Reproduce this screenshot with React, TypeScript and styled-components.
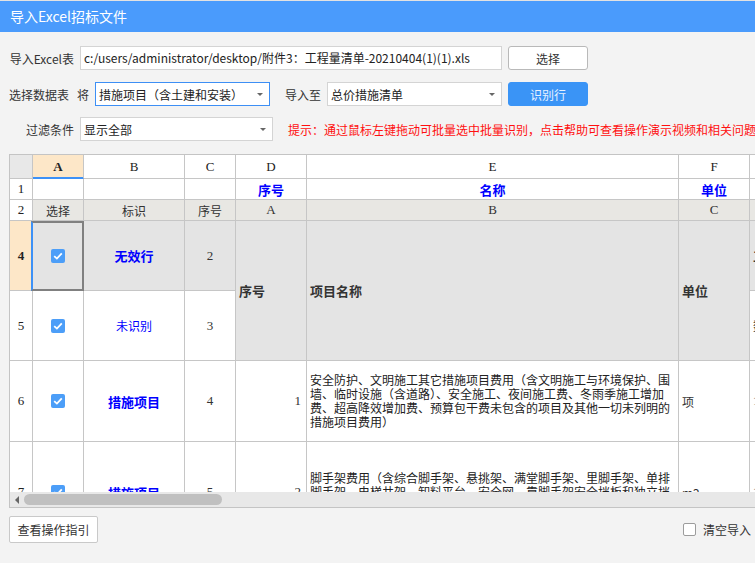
import React from 'react';
import styled, { createGlobalStyle } from 'styled-components';

const GlobalStyle = createGlobalStyle`
  html, body {
    margin: 0;
    padding: 0;
    background: #f3f3f3;
  }
  body {
    font-family: "Noto Sans CJK SC", "Noto Sans", sans-serif;
    font-size: 12px;
    color: #333;
  }
  * {
    box-sizing: border-box;
  }
`;

const CJK = '"Noto Sans CJK SC", "Noto Sans", sans-serif';
const SERIF = '"Liberation Serif", "Noto Sans CJK SC", serif';

const Window = styled.div`
  width: 755px;
  height: 563px;
  overflow: hidden;
  background: #f3f3f3;
  display: flex;
  flex-direction: column;
`;

const TopEdge = styled.div`
  flex: none;
  height: 1px;
  background: #e2e2e2;
`;

const TitleBar = styled.div`
  flex: none;
  height: 31px;
  line-height: 31px;
  padding-left: 10px;
  background: #4a9bfc;
  color: #fff;
  font-size: 14px;
`;

const Form = styled.div`
  display: flex;
  flex-direction: column;
  padding: 14px 0 0 9px;
`;

const FormRow = styled.div<{ $gap?: number }>`
  display: flex;
  align-items: center;
  height: 24px;
  margin-top: ${p => p.$gap ?? 0}px;
  white-space: nowrap;
`;

const Label = styled.span<{ $w?: number; $ml?: number }>`
  flex: none;
  width: ${p => (p.$w ? `${p.$w}px` : 'auto')};
  margin-left: ${p => p.$ml ?? 0}px;
  text-align: right;
  font-size: 12px;
  color: #333;
`;

const TextInput = styled.div`
  flex: none;
  width: 422px;
  height: 24px;
  margin-left: 6px;
  padding-left: 3px;
  line-height: 22px;
  background: #fff;
  border: 1px solid #d4d4d4;
  font-size: 12px;
  color: #222;
  overflow: hidden;
`;

const Select = styled.div<{ $w: number; $ml: number; $focus?: boolean }>`
  flex: none;
  display: flex;
  align-items: center;
  justify-content: space-between;
  width: ${p => p.$w}px;
  height: 24px;
  margin-left: ${p => p.$ml}px;
  padding: 0 6px 0 3px;
  background: #fff;
  border: 1px solid ${p => (p.$focus ? '#3d8ff5' : '#d4d4d4')};
  font-size: 12px;
  color: #222;
`;

const Caret = styled.span`
  width: 0;
  height: 0;
  border-left: 3px solid transparent;
  border-right: 3px solid transparent;
  border-top: 3px solid #666;
`;

const Button = styled.button<{ $primary?: boolean }>`
  flex: none;
  width: 80px;
  height: 24px;
  margin-left: 6px;
  padding: 0;
  border-radius: 3px;
  font-family: ${CJK};
  font-size: 12px;
  background: ${p => (p.$primary ? '#3a94f6' : '#fff')};
  color: ${p => (p.$primary ? '#e8f2ff' : '#333')};
  border: 1px solid ${p => (p.$primary ? '#3a94f6' : '#b9b9b9')};
`;

const Hint = styled.span`
  margin-left: 15px;
  color: #ff1010;
  font-size: 12px;
`;

const Sheet = styled.div`
  flex: none;
  display: flex;
  flex-direction: column;
  width: 760px;
  height: 354px;
  margin: 13px 0 0 9px;
  border: 1px solid #c4c4c4;
  border-right: none;
  background: #fff;
`;

const Viewport = styled.div`
  flex: 1;
  display: grid;
  grid-template-columns: 23px 51px 101px 51px 71px 372px 71px 80px;
  grid-template-rows: 24px 21px 21px 70px 70px 81px 101px;
  align-content: start;
  overflow: hidden;
`;

const CellBase = styled.div`
  display: flex;
  align-items: center;
  border-right: 1px solid #c6c6c6;
  border-bottom: 1px solid #c6c6c6;
  overflow: hidden;
  white-space: nowrap;
`;

const Corner = styled(CellBase)`
  background: #e8e8e8;
`;

const ColHead = styled(CellBase)<{ $active?: boolean }>`
  justify-content: center;
  font-family: ${SERIF};
  font-size: 13px;
  color: #222;
  font-weight: ${p => (p.$active ? 700 : 400)};
  background: ${p => (p.$active ? '#fde7c8' : '#fff')};
  border-bottom-color: ${p => (p.$active ? '#3d91f7' : '#c6c6c6')};
  box-shadow: ${p => (p.$active ? 'inset 0 -1px 0 #3d91f7' : 'none')};
`;

const RowHead = styled(CellBase)<{ $active?: boolean }>`
  justify-content: center;
  font-family: ${SERIF};
  font-size: 13px;
  color: #222;
  font-weight: ${p => (p.$active ? 700 : 400)};
  background: ${p => (p.$active ? '#fde7c8' : '#fff')};
`;

type Align = 'left' | 'center' | 'right';

const Cell = styled(CellBase)<{
  $align?: Align;
  $bg?: string;
  $blue?: boolean;
  $bold?: boolean;
  $latin?: boolean;
  $span?: number;
  $selected?: boolean;
}>`
  position: ${p => (p.$selected ? 'relative' : 'static')};
  overflow: ${p => (p.$selected ? 'visible' : 'hidden')};
  grid-row: ${p => (p.$span ? `span ${p.$span}` : 'auto')};
  justify-content: ${p =>
    p.$align === 'left' ? 'flex-start' : p.$align === 'right' ? 'flex-end' : 'center'};
  padding: ${p => (p.$align === 'right' ? '0 5px 0 0' : p.$align === 'left' ? '0 0 0 3px' : '0')};
  background: ${p => p.$bg ?? '#fff'};
  color: ${p => (p.$blue ? '#0000ff' : '#333')};
  font-family: ${p => (p.$latin ? SERIF : CJK)};
  font-size: ${p => (p.$bold || p.$latin ? 13 : 12)}px;
  font-weight: ${p => (p.$bold ? 700 : 400)};

  &::after {
    content: '';
    display: ${p => (p.$selected ? 'block' : 'none')};
    position: absolute;
    top: 0;
    left: -2px;
    right: -1px;
    bottom: -1px;
    border: 2px solid #808080;
    border-left-color: #3d91f7;
    pointer-events: none;
  }
`;

const Desc = styled.div`
  width: 362px;
  white-space: normal;
  font-size: 12px;
  line-height: 14px;
  color: #222;
`;

const Check = styled.span`
  display: inline-flex;
  align-items: center;
  justify-content: center;
  width: 14px;
  height: 14px;
  border-radius: 2px;
  background: #4c9ef8;
`;

const ScrollTrack = styled.div`
  flex: none;
  display: flex;
  align-items: center;
  height: 15px;
  padding-left: 5px;
  background: #e8e8e8;
`;

const ScrollArrow = styled.span`
  width: 0;
  height: 0;
  border-top: 4px solid transparent;
  border-bottom: 4px solid transparent;
  border-right: 4px solid #666;
`;

const ScrollThumb = styled.div`
  width: 198px;
  height: 11px;
  margin-left: 5px;
  border-radius: 6px;
  background: #c0c0c0;
`;

const Footer = styled.div`
  display: flex;
  align-items: center;
  justify-content: space-between;
  margin-top: 8px;
  padding: 0 4px 0 9px;
`;

const GuideButton = styled.button`
  width: 89px;
  height: 27px;
  padding: 0;
  background: #fff;
  border: 1px solid #c9c9c9;
  border-radius: 2px;
  font-family: ${CJK};
  font-size: 12px;
  color: #333;
`;

const ClearOption = styled.label`
  display: flex;
  align-items: center;
  gap: 7px;
  font-size: 12px;
  color: #333;
`;

const EmptyBox = styled.span`
  width: 13px;
  height: 13px;
  border: 1px solid #9c9c9c;
  border-radius: 2px;
  background: #fff;
`;

const Tick = () => (
  <Check>
    <svg width="10" height="8" viewBox="0 0 10 8">
      <path d="M1.2 4.1 L3.9 6.6 L8.8 1.3" fill="none" stroke="#fff" strokeWidth="1.8" />
    </svg>
  </Check>
);

const GRAY = '#e4e4e4';
const HEAD_GRAY = '#e8e7e3';

const App: React.FC = () => {
  return (
    <Window>
      <GlobalStyle />
      <TopEdge />
      <TitleBar>导入Excel招标文件</TitleBar>

      <Form>
        <FormRow>
          <Label $w={65}>导入Excel表</Label>
          <TextInput>c:/users/administrator/desktop/附件3：工程量清单-20210404(1)(1).xls</TextInput>
          <Button>选择</Button>
        </FormRow>
        <FormRow $gap={12}>
          <Label>选择数据表</Label>
          <Label $ml={8}>将</Label>
          <Select $w={175} $ml={6} $focus>
            措施项目（含土建和安装）
            <Caret />
          </Select>
          <Label $ml={15}>导入至</Label>
          <Select $w={175} $ml={6}>
            总价措施清单
            <Caret />
          </Select>
          <Button $primary>识别行</Button>
        </FormRow>
        <FormRow $gap={11}>
          <Label $w={65}>过滤条件</Label>
          <Select $w={193} $ml={6}>
            显示全部
            <Caret />
          </Select>
          <Hint>提示：通过鼠标左键拖动可批量选中批量识别，点击帮助可查看操作演示视频和相关问题</Hint>
        </FormRow>
      </Form>

      <Sheet>
        <Viewport>
          <Corner />
          <ColHead $active>A</ColHead>
          <ColHead>B</ColHead>
          <ColHead>C</ColHead>
          <ColHead>D</ColHead>
          <ColHead>E</ColHead>
          <ColHead>F</ColHead>
          <ColHead>G</ColHead>

          <RowHead>1</RowHead>
          <Cell />
          <Cell />
          <Cell />
          <Cell $blue $bold>序号</Cell>
          <Cell $blue $bold>名称</Cell>
          <Cell $blue $bold>单位</Cell>
          <Cell />

          <RowHead>2</RowHead>
          <Cell $bg={HEAD_GRAY}>选择</Cell>
          <Cell $bg={HEAD_GRAY}>标识</Cell>
          <Cell $bg={HEAD_GRAY}>序号</Cell>
          <Cell $bg={HEAD_GRAY} $latin>A</Cell>
          <Cell $bg={HEAD_GRAY} $latin>B</Cell>
          <Cell $bg={HEAD_GRAY} $latin>C</Cell>
          <Cell $bg={HEAD_GRAY} $latin>D</Cell>

          <RowHead $active>4</RowHead>
          <Cell $bg={GRAY} $selected><Tick /></Cell>
          <Cell $bg={GRAY} $blue $bold>无效行</Cell>
          <Cell $bg={GRAY} $latin>2</Cell>
          <Cell $bg={GRAY} $bold $align="left" $span={2}>序号</Cell>
          <Cell $bg={GRAY} $bold $align="left" $span={2}>项目名称</Cell>
          <Cell $bg={GRAY} $bold $align="left" $span={2}>单位</Cell>
          <Cell $bg={GRAY} $bold $align="left">工程量</Cell>

          <RowHead>5</RowHead>
          <Cell><Tick /></Cell>
          <Cell $blue>未识别</Cell>
          <Cell $latin>3</Cell>
          <Cell $align="left">数量</Cell>

          <RowHead>6</RowHead>
          <Cell><Tick /></Cell>
          <Cell $blue $bold>措施项目</Cell>
          <Cell $latin>4</Cell>
          <Cell $latin $align="right">1</Cell>
          <Cell $align="left">
            <Desc>安全防护、文明施工其它措施项目费用（含文明施工与环境保护、围墙、临时设施（含道路）、安全施工、夜间施工费、冬雨季施工增加费、超高降效增加费、预算包干费未包含的项目及其他一切未列明的措施项目费用）</Desc>
          </Cell>
          <Cell $align="left">项</Cell>
          <Cell $latin $align="left">1</Cell>

          <RowHead>7</RowHead>
          <Cell><Tick /></Cell>
          <Cell $blue $bold>措施项目</Cell>
          <Cell $latin>5</Cell>
          <Cell $latin $align="right">2</Cell>
          <Cell $align="left">
            <Desc>脚手架费用（含综合脚手架、悬挑架、满堂脚手架、里脚手架、单排脚手架、电梯井架、卸料平台、安全网、靠脚手架安全挡板和独立挡板、围尼龙编织布、外墙外侧满挂安全网等）</Desc>
          </Cell>
          <Cell $align="left">m2</Cell>
          <Cell $latin $align="left">1</Cell>
        </Viewport>
        <ScrollTrack>
          <ScrollArrow />
          <ScrollThumb />
        </ScrollTrack>
      </Sheet>

      <Footer>
        <GuideButton>查看操作指引</GuideButton>
        <ClearOption>
          <EmptyBox />
          清空导入
        </ClearOption>
      </Footer>
    </Window>
  );
};

export default App;
